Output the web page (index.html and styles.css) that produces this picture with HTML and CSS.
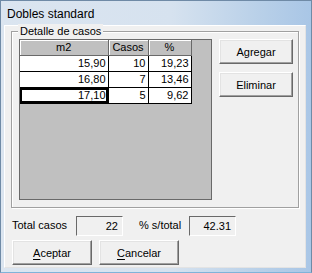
FILE: index.html
```html
<!DOCTYPE html>
<html lang="es">
<head>
    <meta charset="UTF-8">
    <title>Dobles standard</title>
    <link rel="stylesheet" href="styles.css">
</head>
<body>
    <div class="window">
        <div class="titlebar">Dobles standard</div>
        <div class="client">
            <div class="group">
                <span class="group-title">Detalle de casos</span>
                <div class="grid">
                    <table class="cases">
                        <tr>
                            <th class="col-m2">m2</th>
                            <th class="col-casos">Casos</th>
                            <th class="col-pct">%</th>
                        </tr>
                        <tr>
                            <td>15,90</td>
                            <td>10</td>
                            <td>19,23</td>
                        </tr>
                        <tr>
                            <td>16,80</td>
                            <td>7</td>
                            <td>13,46</td>
                        </tr>
                        <tr>
                            <td class="current">17,10</td>
                            <td>5</td>
                            <td>9,62</td>
                        </tr>
                    </table>
                </div>
                <div class="side-buttons">
                    <button class="btn">Agregar</button>
                    <button class="btn">Eliminar</button>
                </div>
            </div>

            <div class="totals">
                <span class="label label-total">Total casos</span>
                <span class="field">22</span>
                <span class="label label-pct">% s/total</span>
                <span class="field">42.31</span>
            </div>

            <div class="actions">
                <button class="btn btn-wide"><u>A</u>ceptar</button>
                <button class="btn btn-wide"><u>C</u>ancelar</button>
            </div>
        </div>
    </div>
</body>
</html>
```

FILE: styles.css
```css
html, body {
    margin: 0;
    padding: 0;
}

body {
    font-family: 'Liberation Sans', Arial, sans-serif;
    font-size: 11px;
    color: #000;
    background: #fff;
}

.window {
    width: 312px;
    height: 273px;
    box-sizing: border-box;
    display: flex;
    flex-direction: column;
    background: linear-gradient(90deg, #dbe5f0 0%, #d6e2ef 55%, #b7cfe8 85%, #a9c6e6 100%);
    border: 1px solid #6f8aa6;
    border-bottom-color: #7fb3d9;
}

.titlebar {
    height: 24px;
    padding-left: 6px;
    font-size: 12px;
    line-height: 26px;
    flex: none;
}

.client {
    margin: 0 5px 4px 3px;
    flex: 1;
    background: #f0f0f0;
    border: 1px solid #fff;
    border-right-color: #e3e3e3;
    border-bottom-color: #e3e3e3;
    padding: 5px 0 0 6px;
    display: flex;
    flex-direction: column;
}

/* group box "Detalle de casos" */
.group {
    position: relative;
    width: 288px;
    height: 177px;
    box-sizing: border-box;
    border: 1px solid #a0a0a0;
    box-shadow: inset 1px 1px 0 #fff, 1px 1px 0 #fff;
    padding: 7px 0 0 7px;
    display: flex;
    gap: 7px;
}

.group-title {
    position: absolute;
    left: 6px;
    top: -8px;
    padding: 0 2px;
    background: #f0f0f0;
    line-height: 14px;
}

.grid {
    width: 193px;
    height: 161px;
    box-sizing: border-box;
    border: 1px solid #696969;
    background: #c0c0c0;
}

.cases {
    border-collapse: collapse;
    table-layout: fixed;
}

.cases th,
.cases td {
    height: 15px;
    padding: 0 2px 0 0;
    line-height: 15px;
    border-right: 1px solid #000;
    border-bottom: 1px solid #000;
    white-space: nowrap;
    box-sizing: border-box;
}

.cases th {
    font-weight: normal;
    text-align: center;
    padding: 0;
    background: #c0c0c0;
    border-color: #696969;
    box-shadow: inset 1px 1px 0 #fff;
}

.cases td {
    background: #fff;
    text-align: right;
}

.col-m2 { width: 88px; }
.col-casos { width: 40px; }
.col-pct { width: 43px; }

.cases td.current {
    box-shadow: inset 0 0 0 2px #000;
}

.side-buttons {
    display: flex;
    flex-direction: column;
    gap: 8px;
}

.btn {
    font-family: inherit;
    font-size: 11px;
    color: #000;
    width: 74px;
    height: 25px;
    padding: 0;
    background: #f0f0f0;
    border: 1px solid;
    border-color: #fff #696969 #696969 #fff;
    box-shadow: inset -1px -1px 0 #a0a0a0, inset 1px 1px 0 #e3e3e3;
}

.btn u {
    text-decoration: underline;
    text-underline-offset: 2px;
}

.totals {
    margin-top: 8px;
    height: 20px;
    display: flex;
    align-items: center;
}

.label {
    line-height: 20px;
    height: 20px;
    margin-top: -3px;
}

.label-total {
    margin-left: 1px;
    width: 64px;
}

.label-pct {
    margin-left: 16px;
    width: 50px;
}

.field {
    width: 47px;
    height: 20px;
    box-sizing: border-box;
    border: 1px solid;
    border-color: #696969 #fff #fff #696969;
    background: #f0f0f0;
    text-align: right;
    padding: 3px 4px 0 0;
}

.actions {
    margin-top: 4px;
    padding-left: 1px;
    display: flex;
    gap: 7px;
}

.btn-wide {
    width: 80px;
}
```
